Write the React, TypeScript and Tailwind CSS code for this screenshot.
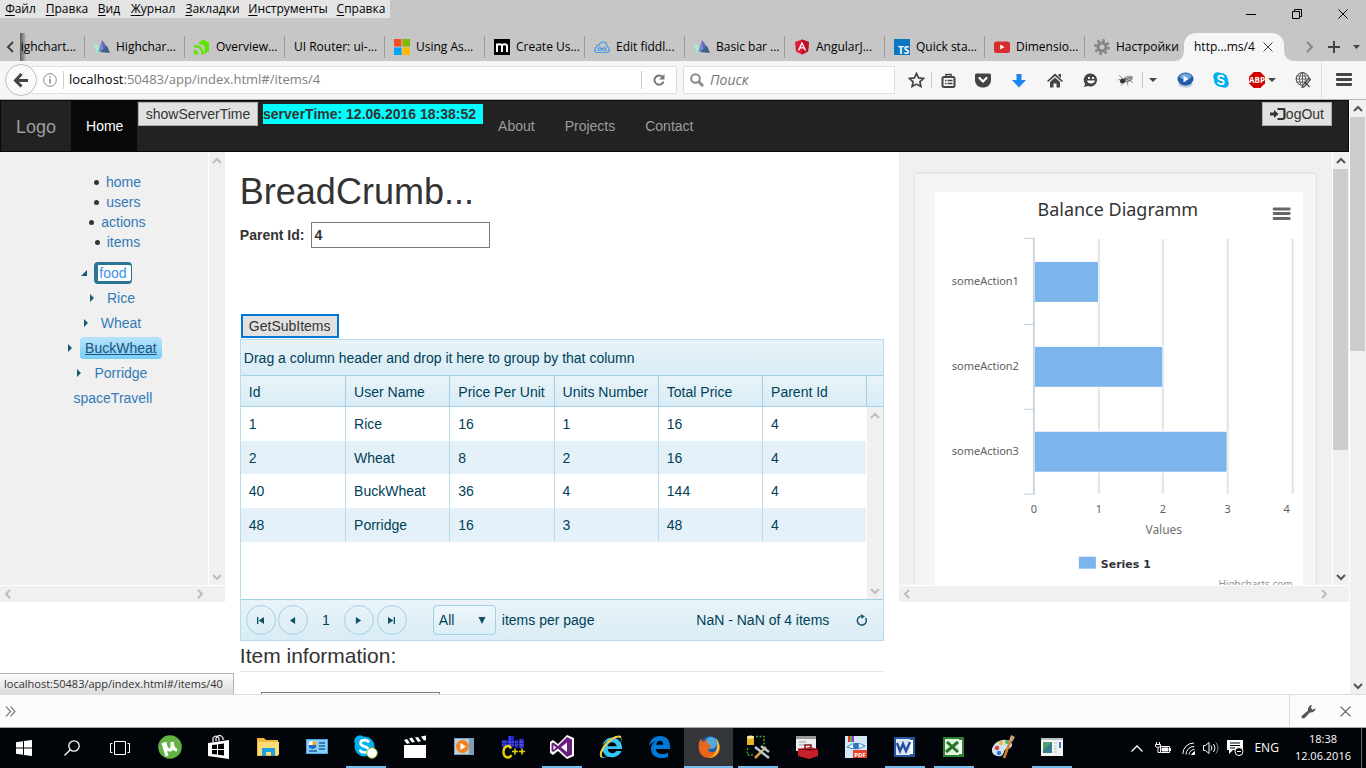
import React from 'react';
import { FaInternetExplorer } from 'react-icons/fa';

type Dir = 'up' | 'down' | 'left' | 'right';

const chevrons: Record<Dir, string> = {
  up: 'M1 7 5 3l4 4',
  down: 'M1 3l4 4 4-4',
  left: 'M7 1 3 5l4 4',
  right: 'M3 1l4 4-4 4',
};

function Chevron({ dir, color = '#bdbdbd' }: { dir: Dir; color?: string }) {
  return (
    <svg width="10" height="10" viewBox="0 0 10 10" fill="none" stroke={color} strokeWidth="2">
      <path d={chevrons[dir]} />
    </svg>
  );
}

function VScroll({ thumb, color }: { thumb?: string; color?: string }) {
  return (
    <div className="flex w-[17px] shrink-0 flex-col items-center border-l border-white bg-[#f0f0f0]">
      <span className="flex h-[17px] items-center"><Chevron dir="up" color={color} /></span>
      <div className="flex w-full grow">{thumb && <div className={`mr-px w-full bg-[#cdcdcd] ${thumb}`} />}</div>
      <span className="flex h-[17px] items-center"><Chevron dir="down" color={color} /></span>
    </div>
  );
}

function HScroll() {
  return (
    <div className="flex h-[17px] shrink-0 items-center justify-between border-t border-white bg-[#f0f0f0] pl-[3px] pr-5">
      <Chevron dir="left" />
      <Chevron dir="right" />
    </div>
  );
}

/* ---------- favicons ---------- */

const HighchartsIcon = () => (
  <svg width="16" height="16" viewBox="0 0 16 16">
    <path d="M0 4l6 5-3 6z" fill="#8ee8b0" />
    <path d="M0 4l9 6-6 5z" fill="#a9efcb" />
    <path d="M8 1 4 13l8-2z" fill="#7b83d8" />
    <path d="M8 1l6 8-4 4z" fill="#5d68b0" />
    <path d="M16 14l-3-7-7 6z" fill="#3f5f86" />
  </svg>
);
const KendoIcon = () => (
  <svg width="16" height="16" viewBox="0 0 16 16" fill="none">
    <path d="M4 4 9 .5l6 3V12l-4.500 3.500V7L4 4z" fill="#5ce500" />
    <path d="M0 7.500c5-1 9 2 8.500 8" stroke="#5ce500" strokeWidth="2.400" />
    <path d="M0 11c3 0 4.500 1.500 4.500 4.500H0z" fill="#5ce500" />
  </svg>
);
const MicrosoftIcon = () => (
  <svg width="16" height="16" viewBox="0 0 16 16">
    <path d="M0 0h7.500v7.500H0z" fill="#f25022" />
    <path d="M8.500 0H16v7.500H8.500z" fill="#7fba00" />
    <path d="M0 8.500h7.500V16H0z" fill="#00a4ef" />
    <path d="M8.500 8.500H16V16H8.500z" fill="#ffb900" />
  </svg>
);
const MIcon = () => (
  <svg width="16" height="16" viewBox="0 0 16 16">
    <path d="M0 0h16v16H0z" fill="#000" />
    <path d="M3 13V4.500M3 7c0-2.500 5-2.500 5 0v6M8 7c0-2.500 5-2.500 5 0v6" stroke="#fff" strokeWidth="2" fill="none" />
  </svg>
);
const FiddleIcon = () => (
  <svg width="16" height="16" viewBox="0 0 16 16" fill="none" stroke="#4a9ae8" strokeWidth="1.200">
    <path d="M4 13.500C1 13.500.6 11.500.7 10.500c.1-1.200 1-2 1.800-2.300C2.500 6.500 4 5.800 5 6.200 6 3 9 2.300 11 3.600c1.800 1.200 2.200 2.600 2 4.200 1.800.7 2.300 1.700 2.300 2.800 0 2-1.500 2.900-3 2.900z" />
    <path d="M8 10c-1-1.500-4-1.500-4 .3s3 1.500 4-.3 4-1.500 4 .3-3 1.500-4-.3z" />
  </svg>
);
const AngularIcon = () => (
  <svg width="16" height="16" viewBox="0 0 16 16">
    <path d="M8 .5 1 3l1 9.500 6 3 6-3L15 3z" fill="#dd1b35" />
    <path d="M8 .5V15.500l6-3L15 3z" fill="#b5142b" />
    <path d="M8 2.500 3.800 11.500h1.600l.8-2h3.600l.8 2h1.600zm0 2.900 1.200 2.900H6.800z" fill="#fff" />
  </svg>
);
const TsIcon = () => (
  <svg width="16" height="16" viewBox="0 0 16 16">
    <path d="M0 0h16v16H0z" fill="#0a76c4" />
    <text x="4" y="14.500" fontSize="10" fontWeight="700" fontFamily="Open Sans, sans-serif" fill="#fff">TS</text>
  </svg>
);
const YoutubeIcon = () => (
  <svg width="16" height="16" viewBox="0 0 16 16">
    <rect y="2.500" width="16" height="11.500" rx="2.500" fill="#d92b2b" />
    <path d="M6.200 5.500v5l4.300-2.500z" fill="#fff" />
  </svg>
);
const GearIcon = () => (
  <svg width="16" height="16" viewBox="0 0 16 16" fill="none" stroke="#858585">
    <circle cx="8" cy="8" r="4" strokeWidth="3" />
    <circle cx="8" cy="8" r="6.600" strokeWidth="2.600" strokeDasharray="2.600 2.580" />
  </svg>
);

const tabs: [string, (() => React.ReactElement) | null][] = [
  ['Highchar...', HighchartsIcon],
  ['Overview...', KendoIcon],
  ['UI Router: ui-...', null],
  ['Using As...', MicrosoftIcon],
  ['Create Us...', MIcon],
  ['Edit fiddl...', FiddleIcon],
  ['Basic bar ...', HighchartsIcon],
  ['AngularJ...', AngularIcon],
  ['Quick sta...', TsIcon],
  ['Dimensio...', YoutubeIcon],
  ['Настройки', GearIcon],
];

const menus: [string, string][] = [
  ['Файл', 'w-[41px]'],
  ['Правка', 'w-[52px]'],
  ['Вид', 'w-[32px]'],
  ['Журнал', 'w-[56px]'],
  ['Закладки', 'w-[63px]'],
  ['Инструменты', 'w-[88px]'],
  ['Справка', 'w-[58px]'],
];

function CloseX({ size = 10, color = '#444' }: { size?: number; color?: string }) {
  return (
    <svg width={size} height={size} viewBox="0 0 10 10" fill="none" stroke={color} strokeWidth="1">
      <path d="M.5.5l9 9M9.500.5l-9 9" />
    </svg>
  );
}

function TitleBar() {
  return (
    <header className="flex h-[61px] shrink-0 flex-col justify-between bg-[#c6c6c6] text-xs text-black">
      <div className="flex h-[28px] items-start justify-between">
        <nav className="flex h-[18px] bg-[#e4e4e4]">
          {menus.map(([m, w]) => (
            <button key={m} className={`whitespace-nowrap text-center leading-[18px] ${w}`}>
              <span className="underline underline-offset-2">{m[0]}</span>{m.slice(1)}
            </button>
          ))}
        </nav>
        <div className="flex h-[28px] items-center">
          <button aria-label="Minimize" className="flex w-[46px] justify-center">
            <svg width="10" height="10" viewBox="0 0 10 10"><path d="M0 5h10v1H0z" /></svg>
          </button>
          <button aria-label="Restore" className="flex w-[46px] justify-center">
            <svg width="10" height="10" viewBox="0 0 10 10" fill="none" stroke="#000"><path d="M.5 2.500h7v7h-7zM2.500 2.500v-2h7v7h-2" /></svg>
          </button>
          <button aria-label="Close" className="flex w-[46px] justify-center"><CloseX color="#000" /></button>
        </div>
      </div>
      <div className="flex h-7 items-center">
        <button aria-label="Scroll tabs back" className="flex w-5 justify-center">
          <svg width="8" height="12" viewBox="0 0 8 12" fill="none" stroke="#444" strokeWidth="2"><path d="M7 1 2 6l5 5" /></svg>
        </button>
        <div className="flex h-full min-w-0 flex-1 items-center">
          <div className="flex h-full w-[64px] shrink-0 items-center justify-end overflow-hidden bg-linear-to-r from-[#5a5a5a] via-[#c6c6c6] via-10% to-[#c6c6c6] pr-2">
            <span className="whitespace-nowrap">highchart...</span>
          </div>
          {tabs.map(([t, Icon], i) => (
            <div key={i} className="flex h-[22px] w-[100px] shrink-0 items-center gap-1.5 border-l border-[#9b9b9b] pl-[9px]">
              {Icon && <Icon />}
              <span className="overflow-hidden whitespace-nowrap">{t}</span>
            </div>
          ))}
          <div className="relative flex h-full w-[100px] shrink-0 items-center rounded-t-xl bg-[#f6f6f6] pl-[10px]">
            <svg className="absolute right-full bottom-0" width="9" height="12" viewBox="0 0 9 12"><path d="M9 0v12H0c5 0 9-3 9-12z" fill="#f6f6f6" /></svg>
            <svg className="absolute left-full bottom-0" width="11" height="12" viewBox="0 0 11 12"><path d="M0 0v12h11C5 12 0 9 0 0z" fill="#f6f6f6" /></svg>
            <span className="w-[69px] whitespace-nowrap">http...ms/4</span>
            <CloseX />
          </div>
        </div>
        <div className="flex w-[66px] items-center justify-between pl-1.5 pr-1.5">
          <svg width="8" height="12" viewBox="0 0 8 12" fill="none" stroke="#888" strokeWidth="2"><path d="M1 1l5 5-5 5" /></svg>
          <svg width="12" height="12" viewBox="0 0 12 12" fill="none" stroke="#444" strokeWidth="2"><path d="M6 0v12M0 6h12" /></svg>
          <svg width="7" height="4" viewBox="0 0 7 4"><path d="M0 0h7L3.500 4z" fill="#444" /></svg>
        </div>
      </div>
    </header>
  );
}

const Caret = () => <svg width="8" height="4" viewBox="0 0 8 4"><path d="M0 0h8L4 4z" fill="#444" /></svg>;

function Toolbar() {
  return (
    <div className="flex h-[39px] shrink-0 items-center border-b border-[#b9b9b9] bg-[#f6f6f6] pl-[5px]">
      <button aria-label="Back" className="z-10 flex size-8 shrink-0 items-center justify-center rounded-full border border-[#bdbdbd] bg-[#fafafa]">
        <svg width="16" height="15" viewBox="0 0 16 15" fill="none" stroke="#444" strokeWidth="3"><path d="M8.500 1 2.500 7.500l6 6M3 7.500h12" /></svg>
      </button>
      <div className="-ml-2 mr-1.5 flex h-7 min-w-0 flex-1 items-center border border-[#e0e0e0] bg-white pl-[13px]">
        <svg className="shrink-0" width="14" height="14" viewBox="0 0 14 14" fill="none" stroke="#888"><circle cx="7" cy="7" r="6.300" /><path d="M7 6v4.500M7 3.300v1.500" strokeWidth="1.500" /></svg>
        <span className="ml-1.5 mr-[5px] h-[18px] w-px bg-[#d0d0d0]" />
        <span className="flex-1 whitespace-nowrap text-[13px] text-[#808080]"><span className="text-black">localhost</span>:50483/app/index.html#/items/4</span>
        <button aria-label="Reload" className="flex h-[18px] w-[35px] items-center justify-center border-l border-[#ccc]">
          <svg width="12" height="12" viewBox="0 0 12 12" fill="none" stroke="#777" strokeWidth="2"><path d="M9.500 3A4.600 4.600 0 1 0 10.500 7.500" /><path d="M11.500 0v5.500H6z" fill="#777" stroke="none" /></svg>
        </button>
      </div>
      <label className="flex h-7 w-[212px] shrink-0 items-center gap-1.5 border border-[#e0e0e0] bg-white pl-1.5">
        <svg width="14" height="14" viewBox="0 0 14 14" fill="none" stroke="#8a8a8a" strokeWidth="2"><circle cx="5.500" cy="5.500" r="4.300" /><path d="M8.500 8.500l4.500 4.500" strokeWidth="3" /></svg>
        <input aria-label="Search" placeholder="Поиск" className="w-40 bg-transparent text-sm italic outline-none placeholder:text-[#777]" />
      </label>
      <div className="flex h-full shrink-0 items-center pl-1.5">
        <button aria-label="Bookmark" className="flex w-[30px] justify-center">
          <svg width="17" height="16" viewBox="0 0 17 16" fill="none" stroke="#444" strokeWidth="1.700"><path d="M8.500 1.500l2.100 4.400 4.900.6-3.600 3.300 1 4.700-4.400-2.400-4.400 2.400 1-4.700L1.500 6.500l4.900-.6z" /></svg>
        </button>
        <button aria-label="Bookmarks list" className="flex h-[16px] w-[34px] items-center justify-center border-l border-[#c8c8c8]">
          <svg width="15" height="15" viewBox="0 0 15 15" fill="none" stroke="#444" strokeWidth="2"><rect x="1.500" y="4" width="12" height="10" rx="1.500" /><path d="M5 4V1.500h5V4" strokeWidth="1.500" /><path d="M4 7.500h1.500M6.500 7.500h5M4 10.500h1.500M6.500 10.500h5" strokeWidth="1.500" /></svg>
        </button>
        <button aria-label="Pocket" className="flex w-9 justify-center">
          <svg width="16" height="15" viewBox="0 0 16 15"><path d="M1.500.5h13q1.500 0 1.500 1.500v5c0 10-16 10-16 0V2Q0 .5 1.500.5z" fill="#444" /><path d="M4.500 5 8 8.500 11.500 5" fill="none" stroke="#fff" strokeWidth="2.200" strokeLinecap="round" /></svg>
        </button>
        <button aria-label="Downloads" className="flex w-9 justify-center">
          <svg width="14" height="15" viewBox="0 0 14 15"><path d="M4.500 1h5v6H14l-7 7.500L0 7h4.500z" fill="#1a86f0" /></svg>
        </button>
        <button aria-label="Home page" className="flex w-9 justify-center">
          <svg width="16" height="15" viewBox="0 0 16 15" fill="#444"><path d="M8 .5 16 8l-1.200 1L8 3 1.200 9 0 8z" /><path d="M8 4.500l5 4.500v5.500H9.500v-4h-3v4H3V9zM11.500 1H14v4l-2.500-2z" /></svg>
        </button>
        <button aria-label="Hello" className="flex w-9 justify-center">
          <svg width="16" height="15" viewBox="0 0 16 15"><path d="M8 .5a6.800 6.500 0 1 1-3 12.600L1 14l1.200-3A6.500 6.500 0 0 1 8 .5z" fill="#444" /><path d="M5 4h1.800v2H5zM9.200 4H11v2H9.200z" fill="#fff" /><path d="M4 7.500h8c-.5 4-7.500 4-8 0z" fill="#fff" /></svg>
        </button>
        <button aria-label="Firebug" className="flex w-[33px] justify-center">
          <svg width="16" height="12" viewBox="0 0 16 12"><ellipse cx="10" cy="5" rx="5" ry="3" transform="rotate(-20 10 5)" fill="#777" /><circle cx="4.500" cy="7" r="2.500" fill="#333" /><path d="M1 1l4 4M2 5.500l-2 .5M5 9l-2 2.500M9 8l1 3.500M12 6l3 3" stroke="#777" strokeWidth=".8" /><path d="M8 4l5-2M8 7l6-3" stroke="#ccc" /></svg>
        </button>
        <button aria-label="Firebug options" className="flex h-[16px] w-[21px] items-center justify-center border-l border-[#c8c8c8]"><Caret /></button>
        <button aria-label="Video helper" className="ml-1 flex w-9 justify-center">
          <svg width="17" height="16" viewBox="0 0 17 16"><ellipse cx="8.500" cy="12" rx="7" ry="3.500" fill="#b8c6d8" /><ellipse cx="8.500" cy="7" rx="8" ry="6.500" fill="#1d5daa" /><ellipse cx="8.500" cy="4.500" rx="6" ry="3" fill="#6fa4dd" /><path d="M6.500 3.500v7l5-3.500z" fill="#fff" /></svg>
        </button>
        <button aria-label="Skype" className="flex w-9 justify-center">
          <svg width="16" height="16" viewBox="0 0 16 16"><circle cx="8" cy="8" r="7" fill="#00aff0" /><circle cx="4.500" cy="4.500" r="4.300" fill="#00aff0" /><circle cx="11.500" cy="11.500" r="4.300" fill="#00aff0" /><path d="M11 5.500C10 3 5.300 3.200 5.300 5.700c0 2.700 5.600 1.800 5.600 4.500 0 2.500-5 2.800-6-.2" fill="none" stroke="#fff" strokeWidth="1.800" /></svg>
        </button>
        <button aria-label="Adblock" className="flex w-[46px] items-center justify-center gap-[3px]">
          <svg width="16" height="16" viewBox="0 0 16 16"><path d="M4.700 0h6.600L16 4.700v6.600L11.300 16H4.700L0 11.300V4.700z" fill="#d00000" /><text x="8" y="10.800" textAnchor="middle" fontSize="8" fontWeight="700" fontFamily="Open Sans, sans-serif" fill="#fff">ABP</text></svg>
          <Caret />
        </button>
        <button aria-label="Web tools" className="flex w-9 justify-center">
          <svg width="16" height="16" viewBox="0 0 16 16" fill="none" stroke="#444"><circle cx="7.500" cy="7" r="6.400" /><ellipse cx="7.500" cy="7" rx="3" ry="6.400" strokeWidth=".8" /><path d="M1.500 4h12M1 7h13M1.500 10h12M7.500.5v13" strokeWidth=".8" /><path d="M8 14.500l6.500-7" stroke="#f6f6f6" strokeWidth="4.500" /><path d="M7 15.500l1-2.500 6-7 1.500 1.500-6 7zM9.500 9.500l5 5.500" strokeWidth="1.200" /></svg>
        </button>
        <button aria-label="Menu" className="flex h-full w-[45px] items-center justify-center border-l border-[#dedede]">
          <svg width="16" height="14" viewBox="0 0 16 14" fill="#444"><rect width="16" height="3" rx="1" /><rect y="5" width="16" height="3" rx="1" /><rect y="10" width="16" height="3" rx="1" /></svg>
        </button>
      </div>
    </div>
  );
}

/* ---------- page ---------- */

const winButton = 'flex h-6 items-center border border-[#adadad] bg-[#e1e1e1] text-[#333]';

function Navbar() {
  return (
    <nav className="flex h-[52px] items-stretch border border-[#080808] bg-[#222] text-[#9d9d9d]">
      <a href="#/" className="flex items-center px-[15px] pt-0.5 text-lg">Logo</a>
      <a href="#/home" className="flex w-[66px] items-center bg-[#080808] pl-[15px] text-white">Home</a>
      <button className={`mt-px ml-px w-[120px] justify-center whitespace-nowrap ${winButton}`}>showServerTime</button>
      <b className="mt-[3px] ml-[5px] h-5 min-w-[220px] bg-[#0ff] leading-5 whitespace-nowrap text-[#333]">serverTime: 12.06.2016 18:38:52</b>
      <a href="#/about" className="flex items-center px-[15px]">About</a>
      <a href="#/projects" className="flex items-center px-[15px]">Projects</a>
      <a href="#/contact" className="flex items-center px-[15px]">Contact</a>
      <button className={`mt-px mr-4 ml-auto pr-[7px] pl-[7px] ${winButton}`}>
        <svg className="w-[13px] overflow-visible" width="13" height="12" viewBox="0 0 13 12"><path d="M0 4.500h4V2L8.500 6 4 10V7.500H0z" fill="#333" /><path d="M7.500 1H12.500q2 0 2 2v6q0 2-2 2H7.500" fill="none" stroke="#333" strokeWidth="2" /></svg>
        logOut
      </button>
    </nav>
  );
}

function Node({ label, closed = true, leaf, href }: { label: string; closed?: boolean; leaf?: boolean; href: string }) {
  const box =
    label === 'food'
      ? 'rounded-sm border-y-[3px] border-r border-l-[4px] border-[#2a7595] bg-white text-[#3a94e8]'
      : label === 'BuckWheat'
        ? 'rounded-sm bg-linear-to-b from-[#b5e4fb] to-[#77cef6] px-[5px] text-[#23527c] underline'
        : 'px-[5px]';
  const food = label === 'food' ? 'pl-px pr-1 leading-4' : 'leading-[22px]';
  return (
    <div className="flex h-[25px] items-center justify-center">
      <span className="flex w-[18px] justify-center pr-0.5">
        {!leaf && (
          <svg width="8" height="8" viewBox="0 0 8 8" fill="#1b5a74"><path d={closed ? 'M2 0v8l4-4z' : 'M7 1v6H1z'} /></svg>
        )}
      </span>
      <a href={href} className={`${box} ${food}`}>{label}</a>
    </div>
  );
}

function Sidebar() {
  return (
    <aside className="col-span-2 flex h-[450px] flex-col bg-[#f0f0f0]">
      <div className="flex min-h-0 flex-1">
        <div className="min-w-0 flex-1 overflow-hidden pt-5 text-[#337ab7]">
          <ul className="mb-2 pl-[27px]">
            {['home', 'users', 'actions', 'items'].map((t) => (
              <li key={t} className="flex h-5 items-center justify-center gap-[7px]">
                <span className="size-[5px] rounded-full bg-[#333]" />
                <a href={`#/${t}`}>{t}</a>
              </li>
            ))}
          </ul>
          <Node label="food" closed={false} href="#/items/4" />
          <div className="pl-4">
            <Node label="Rice" href="#/items/1" />
            <Node label="Wheat" href="#/items/2" />
            <Node label="BuckWheat" href="#/items/40" />
            <Node label="Porridge" href="#/items/48" />
          </div>
          <Node label="spaceTravell" leaf href="#/items/5" />
        </div>
        <VScroll />
      </div>
      <HScroll />
    </aside>
  );
}

const columns = ['Id', 'User Name', 'Price Per Unit', 'Units Number', 'Total Price', 'Parent Id'];
const rows = [
  ['1', 'Rice', '16', '1', '16', '4'],
  ['2', 'Wheat', '8', '2', '16', '4'],
  ['40', 'BuckWheat', '36', '4', '144', '4'],
  ['48', 'Porridge', '16', '3', '48', '4'],
];

function PagerButton({ label, d, className = '' }: { label: string; d: string; className?: string }) {
  return (
    <button aria-label={label} className={`flex size-[30px] items-center justify-center rounded-full border border-[#a3d0e4] ${className}`}>
      <svg width="7" height="7" viewBox="0 0 8 8" fill="#0f4f66"><path d={d} /></svg>
    </button>
  );
}

function Grid() {
  return (
    <section className="border border-[#b8dcea] text-[#003f59]">
      <div className="flex h-9 items-center border-b border-[#a3d0e4] bg-linear-to-b from-[#e9f4f9] to-[#d9ecf5] pl-[3px]">
        Drag a column header and drop it here to group by that column
      </div>
      <div className="flex h-[224px] items-stretch border-b border-[#a3d0e4]">
        <div className="min-w-0 flex-1">
          <table className="w-full table-fixed border-separate border-spacing-0 text-left">
            <thead>
              <tr className="bg-linear-to-b from-[#e9f4f9] to-[#d9ecf5]">
                {columns.map((c, i) => (
                  <th key={c} className={`h-[31px] border-b border-[#a3d0e4] px-2 pt-0.5 font-normal whitespace-nowrap ${i ? 'border-l' : ''}`}>{c}</th>
                ))}
              </tr>
            </thead>
            <tbody>
              {rows.map((r, ri) => (
                <tr key={r[0]} className={ri % 2 ? 'bg-[#e5f1f8]' : 'bg-white'}>
                  {r.map((c, i) => (
                    <td key={i} className={`border-[#b8dcea] px-2 ${ri === 1 ? 'h-[33px]' : 'h-[34px]'} ${i ? 'border-l' : ''}`}>{c}</td>
                  ))}
                </tr>
              ))}
            </tbody>
          </table>
        </div>
        <div className="flex w-[17px] flex-col">
          <div className="h-[31px] shrink-0 border-b border-l border-[#a3d0e4] bg-linear-to-b from-[#e9f4f9] to-[#d9ecf5]" />
          <div className="flex min-h-0 flex-1"><VScroll /></div>
        </div>
      </div>
      <div className="flex h-10 items-center bg-linear-to-b from-[#e9f4f9] to-[#d9ecf5] pl-[5px]">
        <PagerButton label="First page" d="M0 0h1.500v8H0zM8 0v8L2 4z" className="mr-0.5" />
        <PagerButton label="Previous page" d="M7 0v8L1 4z" />
        <span className="w-9 text-center">1</span>
        <PagerButton label="Next page" d="M1 0v8l6-4z" className="mr-[3px]" />
        <PagerButton label="Last page" d="M8 0H6.500v8H8zM0 0v8l6-4z" />
        <label className="ml-[26px] flex items-center gap-1.5">
          <span className="flex h-[30px] w-[63px] items-center rounded-sm border border-[#a3d0e4] bg-linear-to-b from-[#edf6fa] to-[#dceef6] pr-[9px]">
            <select className="w-full appearance-none bg-transparent pl-[5px] outline-none">
              <option>All</option>
              <option>5</option>
              <option>10</option>
            </select>
            <svg className="shrink-0" width="8" height="7" viewBox="0 0 8 7"><path d="M.5 0h7L4 7z" fill="#0f4f66" /></svg>
          </span>
          items per page
        </label>
        <span className="ml-auto">NaN - NaN of 4 items</span>
        <button aria-label="Refresh" className="ml-[27px] mr-[15px]">
          <svg width="12" height="12" viewBox="0 0 12 12" fill="none" stroke="#1d5a72" strokeWidth="1.500"><path d="M4.500 2.300A4.500 4.500 0 1 0 9.500 4" /><path d="M4.500 0l4.500 2.200L5.500 5z" fill="#1d5a72" stroke="none" /></svg>
        </button>
      </div>
    </section>
  );
}

const points = [1, 2, 3];

function Chart() {
  return (
    <svg className="block h-[400px] w-full bg-white" viewBox="0 0 368 400" preserveAspectRatio="xMidYMin meet" fontFamily="Noto Sans, sans-serif" fontSize="12" fill="#606060">
      <text x="183" y="24" textAnchor="middle" fontSize="18" fill="#333">Balance Diagramm</text>
      <path d="M339.500 17h15M339.500 21.500h15M339.500 26.500h15" stroke="#666" strokeWidth="3" strokeLinecap="round" />
      {[164, 228, 293, 358].map((x) => (
        <path key={x} d={`M${x} 47V302`} stroke="#e3e3e3" strokeWidth="2" />
      ))}
      <path d="M99 46V303" stroke="#ccd6e4" strokeWidth="2" />
      {[46, 132, 217, 302].map((y) => (
        <path key={y} d={`M89 ${y + 0.5}h10`} stroke="#c0d0e0" />
      ))}
      {points.map((v, i) => (
        <g key={v}>
          <rect x="100" y={69 + 85 * i} width={64.300 * v - 0.300} height="42" fill="#fff" />
          <rect x="100" y={70 + 85 * i} width={64.300 * v - 1} height="40" fill="#7cb5ec" />
          <text x="84" y={93 + 85 * i} textAnchor="end" fontSize="11">{`someAction${v}`}</text>
        </g>
      ))}
      {[99, 164, 228, 293, 352].map((x, i) => (
        <text key={x} x={x} y="321" textAnchor="middle" fontSize="11">{i}</text>
      ))}
      <text x="229" y="342" textAnchor="middle" fill="#707070">Values</text>
      <rect x="144" y="365" width="17" height="12" fill="#7cb5ec" />
      <text x="166" y="376" fontSize="11" fontWeight="700" fontFamily="DejaVu Sans, sans-serif" fill="#333">Series 1</text>
      <text x="358" y="396" textAnchor="end" fontSize="10" fill="#909090">Highcharts.com</text>
    </svg>
  );
}

function Page() {
  return (
    <div className="flex min-h-0 flex-1 bg-white font-['Liberation_Sans',Arial,sans-serif] text-sm text-[#333]">
      <div className="relative min-w-0 flex-1 overflow-hidden">
        <Navbar />
        <div className="grid grid-cols-12">
          <Sidebar />
          <main className="col-span-6 px-[15px]">
            <h1 className="mt-5 mb-2.5 text-4xl leading-10">BreadCrumb...</h1>
            <label className="flex items-center gap-[7px] font-bold">
              Parent Id:
              <input defaultValue="4" className="h-[26px] w-[179px] border border-[#7a7a7a] bg-white px-0.5 outline-none" />
            </label>
            <button className="mt-[66px] ml-px mb-px flex h-6 items-center border-2 border-[#0078d7] bg-[#e1e1e1] px-1.5">GetSubItems</button>
            <Grid />
            <h2 className="mb-5 border-b border-[#e5e5e5] text-[21px] leading-[30px]">Item information:</h2>
            <input aria-label="Item name" className="ml-[21px] h-[26px] w-[179px] border border-[#7a7a7a]" />
          </main>
          <aside className="col-span-4 flex h-[450px] flex-col bg-[#f0f0f0]">
            <div className="flex min-h-0 flex-1">
              <div className="min-w-0 flex-1 overflow-hidden px-[15px] pt-5">
                <div className="rounded border border-[#e3e3e3] bg-[#f5f5f5] py-[19px] pl-5 pr-[13px] shadow-[inset_0_1px_1px_rgba(0,0,0,0.05)]">
                  <Chart />
                </div>
              </div>
              <VScroll thumb="h-[281px]" color="#555" />
            </div>
            <HScroll />
          </aside>
        </div>
        <div className="absolute bottom-0 left-0 flex h-[21px] min-w-[234px] items-center border-t border-r border-[#b5b5b5] bg-linear-to-b from-[#fbfbfb] to-[#dcdcdc] px-1 font-['Open_Sans',sans-serif] text-[11px]">
          localhost:50483/app/index.html#/items/40
        </div>
      </div>
      <VScroll thumb="h-[234px]" color="#555" />
    </div>
  );
}

function FindBar() {
  return (
    <div className="flex h-[34px] shrink-0 items-stretch border-t border-b border-t-[#dcdfe2] border-b-[#aaa] bg-[#fcfcfc]">
      <button aria-label="Expand" className="flex flex-1 items-center pl-[5px]">
        <svg width="11" height="11" viewBox="0 0 11 11" fill="none" stroke="#888" strokeWidth="1.300"><path d="M1 .5l4.500 5L1 10.500M5.500.5l4.500 5-4.500 5" /></svg>
      </button>
      <div className="flex w-[77px] items-center border-l border-[#d8dbde] pl-[11px]">
        <svg width="15" height="15" viewBox="0 0 16 16" fill="#555"><path d="M1 12.500 7.500 7C7 4 9 1 12 1l-1.500 3L12.500 6 15.500 4.500C15.500 7.500 12.500 9.500 9.500 9L4 15Q2 16 1 15T1 12.500z" /></svg>
        <span className="ml-6 flex"><CloseX size={11} color="#555" /></span>
      </div>
    </div>
  );
}

/* ---------- taskbar ---------- */

type App = { name: string; icon: React.ReactElement; open?: boolean; active?: boolean };

const apps: App[] = [
  { name: 'uTorrent', icon: <svg width="24" height="24" viewBox="0 0 24 24"><circle cx="12" cy="12" r="11.800" fill="#62b246" /><path d="M5 8l4 13M7 7q1 8 4.500 8T14 7M14 7q1 8 5 8" stroke="#fff" strokeWidth="3.200" fill="none" /></svg> },
  { name: 'Store', icon: <svg width="22" height="24" viewBox="0 0 22 24"><path d="M0 8l21-3v19L0 21z" fill="#fff" /><path d="M5 7V3q3-4 6 0v3M8 6V3q4-5 7 0v2" stroke="#fff" fill="none" strokeWidth="1.200" /><path d="M4 10l5-.6V14H4zM10 9.300l6-.8V14h-6zM4 15h5v4.500L4 19zM10 15h6v5.500l-6-.8z" fill="#000" /></svg> },
  { name: 'Explorer', icon: <svg width="22" height="20" viewBox="0 0 22 20"><path d="M0 1h7l2 2h12v16H0z" fill="#f0b93a" /><path d="M1 5h21v13H1z" fill="#fddb77" /><path d="M5 19v-8h13v8h-4v-4H9v4z" fill="#1ba1e2" /></svg> },
  { name: 'Control panel', icon: <svg width="22" height="16" viewBox="0 0 22 16"><path d="M0 0h22v15H0z" fill="#4aa8e6" /><path d="M1 1h20v13H1z" fill="#8ccdf5" /><circle cx="6.500" cy="6" r="4" fill="#fff" /><path d="M6.500 6V2a4 4 0 0 1 4 4z" fill="#f5a623" /><path d="M2.500 6h8a4 4 0 0 1-8 0z" fill="#1c6fc0" /><path d="M13 4h6M13 7h6M13 10h6M3 12h8" stroke="#1761a7" strokeWidth="1.500" /></svg> },
  { name: 'Skype', open: true, icon: <svg width="24" height="24" viewBox="0 0 24 24"><circle cx="10.500" cy="11.500" r="10" fill="#00aff0" /><circle cx="6" cy="6" r="5.800" fill="#00aff0" /><path d="M15 7.500C13 4 6.500 4.500 6.500 8.200c0 4 8 2.500 8 6.500 0 3.500-7 3.800-8.700 0" fill="none" stroke="#fff" strokeWidth="2.600" /><circle cx="18" cy="18" r="5.300" fill="#fff" stroke="#7fba29" /></svg> },
  { name: 'Movie maker', icon: <svg width="22" height="24" viewBox="0 0 22 24" fill="#fff"><path d="M0 10h22v13H0z" /><path d="M0 5l3-1 3 4-3 1zM5 3.500l3-1 3 4.500-3 .5zM11 2.500l3-.6 3 4.400-3 .6zM17 1.500l5-1V5l-2 .8z" /></svg> },
  { name: 'Media player', icon: <svg width="20" height="18" viewBox="0 0 20 18"><path d="M0 0h20v17H0z" fill="#7d9fb5" /><path d="M1 1h14v15H1z" fill="#b9d3e2" /><circle cx="8.500" cy="8.500" r="6.500" fill="#f58220" /><path d="M6.500 5v7l5.500-3.500z" fill="#fff" /></svg> },
  { name: 'C++ Builder', icon: <svg width="24" height="24" viewBox="0 0 24 24"><path d="M1 5h5v8H1zM7 1h6v11H7zM14 5h3v8h-3zM18 4h5v9h-5z" fill="#2020d8" /><path d="M1 7h22M1 10h22M9 1v11M20 4v9" stroke="#77a" strokeDasharray="1.500 1" /><path d="M10 13.500C8 9 2.500 11 2.500 17s6 7 8 3" fill="none" stroke="#e8d400" strokeWidth="2.400" /><path d="M11 16.500h6M14 13.500v6M18 16.500h6M21 13.500v6" stroke="#e8d400" strokeWidth="1.600" /></svg> },
  { name: 'Visual Studio', open: true, icon: <svg width="24" height="24" viewBox="0 0 24 24"><path d="M17 0l7 3v18l-7 3-9-8-5 4-3-2V7l3-2 5 4z" fill="#fff" /><path d="M17 2l5 2.500v15L17 22 8 13.500 3.500 17 1.500 16V8.500l2-1L8 11z" fill="#68217a" /><path d="M17 7.500v9.500l-6-4.700zM3.500 10v5L6 12.400z" fill="#fff" /></svg> },
  { name: 'Internet Explorer', icon: <svg width="24" height="24" viewBox="0 0 24 24"><g color="#37c5f5"><FaInternetExplorer size={22} x={1} y={1} /></g><path d="M3 22C-3 18 14-2 22 2" fill="none" stroke="#f8c82e" strokeWidth="2" /></svg> },
  { name: 'Edge', icon: <svg width="21" height="22" viewBox="0 0 21 22"><path d="M0 10C1 4 5 0 11 0c6 0 10 4 10 10v3H7c0 5 7 6.500 12 3.500V21c-8 3-17 0-17-8 0-4 2-6.500 5.500-8C4.500 5.500 1.500 7.500 0 10zm7.200-1.200h7C14.200 3.500 8 3.500 7.200 8.800z" fill="#0078d7" /></svg> },
  { name: 'Firefox', open: true, active: true, icon: <svg width="24" height="24" viewBox="0 0 24 24"><circle cx="13" cy="11" r="10" fill="#1b5fb0" /><circle cx="14" cy="8" r="6" fill="#52a9dd" /><path d="M4 3c-5 9-2 20 8.500 20 8 0 12-7 10-14-1 6-5 9-9 8-3-1-3-3-1-4 2 0 2-2 0-3-3-1-3-3-1-5-3 0-4 1-5 2C5 6 4 5 4 3z" fill="#e9661a" /><path d="M19 3c7 9 1 20-7 20 7-2 10-11 7-20z" fill="#ffc62e" /></svg> },
  { name: 'SQL tools', open: true, icon: <svg width="24" height="24" viewBox="0 0 24 24"><path d="M1 2h7v8H1z" fill="#e6b422" /><ellipse cx="4.500" cy="2" rx="3.500" ry="1.500" fill="#fff0a0" /><path d="M10 1.500h8v8M1.500 13v7h7" fill="none" stroke="#3fa535" strokeDasharray="2 1.500" strokeWidth="1.500" /><path d="M9 23L20 12" stroke="#d8a43b" strokeWidth="2.500" /><path d="M9 12l14 11M15 11l8 6" stroke="#b9c6d4" strokeWidth="2.500" /></svg> },
  { name: 'Toolbox', icon: <svg width="22" height="24" viewBox="0 0 22 24"><path d="M0 1h20v15H0z" fill="#eee" /><path d="M0 1h20v3H0z" fill="#999" /><path d="M3 7h7M3 10h5" stroke="#999" /><path d="M2 14l12-2 8 2v7l-9 3-11-3z" fill="#c8202a" /><path d="M2 14l12 1 8-1" stroke="#761018" /><path d="M9 13v-3h6v3" fill="none" stroke="#7a1515" strokeWidth="1.500" /></svg> },
  { name: 'PDF viewer', icon: <svg width="22" height="22" viewBox="0 0 22 22"><path d="M0 0h22v22H0z" fill="#d4e9f7" /><path d="M3 0h2v6H3z" fill="#e33" /><path d="M5 0h2v6H5z" fill="#4b4" /><path d="M7 0h2v6H7z" fill="#93d" /><path d="M2 11q9-7 18-1-8 5-18 1z" fill="#fff" stroke="#3885c5" /><circle cx="11" cy="10" r="3" fill="#2d77bb" /><path d="M8 14h14v8H8z" fill="#e8432e" /><text x="15" y="20.500" fontSize="6" fontWeight="700" textAnchor="middle" fill="#fff">PDF</text></svg> },
  { name: 'Word', open: true, icon: <svg width="22" height="22" viewBox="0 0 22 22"><path d="M0 1h21v20H0z" fill="#2b579a" /><path d="M2 3h14v16H2z" fill="#dbe6f6" /><path d="M16 4h3v14h-3z" fill="#fff" /><path d="M3 7l3 8 3-7 3 7 4-9" fill="none" stroke="#2451a5" strokeWidth="2.500" /></svg> },
  { name: 'Excel', open: true, icon: <svg width="22" height="22" viewBox="0 0 22 22"><path d="M0 1h21v20H0z" fill="#2f8033" /><path d="M2 3h14v16H2z" fill="#e0f2dc" /><path d="M16 4h3v14h-3z" fill="#fff" /><path d="M4 6l11 10M15 6L3 16" stroke="#27752c" strokeWidth="3" /></svg> },
  { name: 'Paint', icon: <svg width="24" height="24" viewBox="0 0 24 24"><path d="M1 14C3 6 14 2 20 7c3 4-1 7-4 7-4 0-2 5-6 7-5 1-10-2-9-7z" fill="#cfe4f2" /><circle cx="6" cy="13" r="2.300" fill="#e04343" /><circle cx="10" cy="8" r="2.200" fill="#f5b82e" /><circle cx="16" cy="7" r="2" fill="#55b949" /><circle cx="8" cy="18" r="2.200" fill="#2d77d0" /><path d="M13 23l6-16" stroke="#d6812a" strokeWidth="2.500" /><path d="M18 6l2-6 4 2-3 5z" fill="#c9a27c" /></svg> },
  { name: 'Window', open: true, icon: <svg width="22" height="18" viewBox="0 0 22 18"><path d="M0 0h22v18H0z" fill="#f4f4f4" /><path d="M0 0h22v2H0z" fill="#b8c0c8" /><path d="M2 4h9v11H2z" fill="#3b7c8c" /><path d="M2 4h9L2 12z" fill="#4aa46c" /><path d="M13 5h3M13 8h3M13 11h3M13 14h3" stroke="#bbb" /><path d="M18 4h2v6h-2z" fill="#3d7dd8" /></svg> },
];

function Taskbar() {
  return (
    <footer className="flex h-10 shrink-0 bg-[#010409] text-xs text-white">
      <button aria-label="Start" className="flex w-12 items-center justify-center">
        <svg width="16" height="16" viewBox="0 0 16 16" fill="#fff"><path d="M0 2.300 7 1.300v6.200H0zM8 1.100 16 0v7.500H8zM0 8.500h7v6.200l-7-1zM8 8.500h8V16l-8-1.100z" /></svg>
      </button>
      <button aria-label="Search Windows" className="flex w-12 items-center justify-center">
        <svg width="16" height="16" viewBox="0 0 16 16" fill="none" stroke="#fff" strokeWidth="1.300"><circle cx="10" cy="6" r="5.200" /><path d="M6.300 9.700.5 15.500" /></svg>
      </button>
      <button aria-label="Task view" className="mr-px flex w-12 items-center justify-center">
        <svg width="20" height="14" viewBox="0 0 20 14" fill="none" stroke="#fff"><path d="M4.500.5h11v13h-11zM2.500 2.500h-2v9h2M17.500 2.500h2v9h-2" /></svg>
      </button>
      {apps.map((a) => (
        <button key={a.name} aria-label={a.name} className={`flex w-[49px] flex-col items-center ${a.active ? 'bg-[#333538]' : ''}`}>
          <span className="flex h-[38px] items-center">{a.icon}</span>
          {a.open && <span className={`h-0.5 bg-[#76b9ed] ${a.active ? 'w-full' : 'w-10'}`} />}
        </button>
      ))}
      <div className="ml-auto flex items-center">
        <svg width="12" height="7" viewBox="0 0 12 7" fill="none" stroke="#fff" strokeWidth="1.300"><path d="M.5 6.500 6 1l5.500 5.500" /></svg>
        <svg className="ml-3" width="17" height="14" viewBox="0 0 17 14" fill="none" stroke="#fff"><path d="M5.500 5.500h9v6h-9z" /><path d="M7 7h6v3H7z" fill="#fff" /><path d="M15.500 7v3M1.500 1v2M4.500 1v2M.5 3.500h5v2q-2.500 2-5 0zM3 7v4.500h2" /></svg>
        <svg className="ml-2.5" width="13" height="13" viewBox="0 0 13 13" fill="none" stroke="#fff"><path d="M.8 12A11 11 0 0 1 12 1M4 12.500A8 8 0 0 1 12.300 4.500M7 12.500A5.500 5.500 0 0 1 12.500 7.500" /><path d="M9.500 12.500l3-3v3z" fill="#fff" /></svg>
        <svg className="ml-2" width="16" height="14" viewBox="0 0 16 14" fill="none" stroke="#fff"><path d="M.5 4.500h2l3.500-3v11l-3.500-3h-2zM8 4.500q1.800 2.500 0 5M10.500 3q3 4 0 8" /><path d="M13 1.500q4 5.500 0 11" stroke="#888" /></svg>
        <svg className="ml-2" width="17" height="16" viewBox="0 0 17 16"><path d="M0 0h16v10H6l-4 4v-4H0z" fill="#fff" /><path d="M3 3h10M3 5.500h10M3 8h5" stroke="#000" /><circle cx="12" cy="11.500" r="4" fill="#000" stroke="#fff" /><path d="M10 11.500h4" stroke="#fff" /></svg>
        <span className="ml-2.5">ENG</span>
        <div className="mr-2.5 mb-0.5 ml-4 flex flex-col items-center text-[11px] leading-[17px]">
          <span>18:38</span>
          <span>12.06.2016</span>
        </div>
        <span className="mr-1 h-10 w-px bg-[#666]" />
      </div>
    </footer>
  );
}

export default function App() {
  return (
    <div className="flex h-screen flex-col overflow-hidden bg-white font-['Open_Sans','Noto_Sans',sans-serif]">
      <TitleBar />
      <Toolbar />
      <Page />
      <FindBar />
      <Taskbar />
    </div>
  );
}
